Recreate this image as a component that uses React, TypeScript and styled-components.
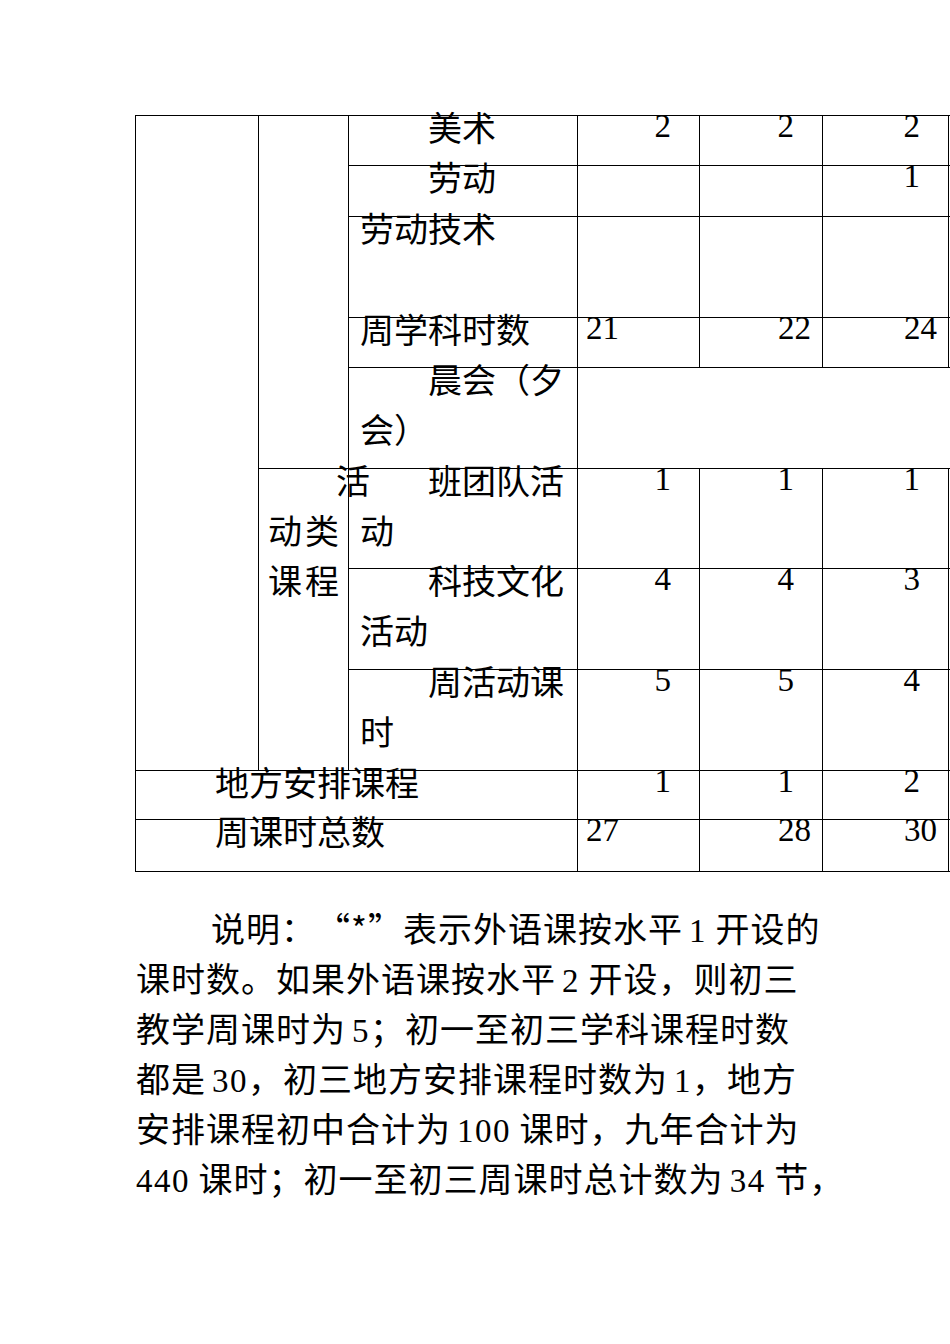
import React from 'react';
import styled, { createGlobalStyle } from 'styled-components';

const GlobalStyle = createGlobalStyle`
    html, body {
        margin: 0;
        padding: 0;
        background: #fff;
        overflow: hidden;
    }
    body {
        font-family: "Noto Sans CJK SC", "Liberation Serif", serif;
        color: #000;
    }
`;

const Page = styled.div`
    width: 950px;
    height: 1344px;
    box-sizing: border-box;
    padding: 115px 0 0 135px;
    overflow: hidden;
    text-spacing-trim: space-all;
`;

const Grid = styled.div`
    display: grid;
    grid-template-columns: 123px 90px 229px 122px 123px 126px 120px;
    grid-template-rows: 50px 51px 101px 50px 101px 100px 101px 101px 49px 52px;
    width: max-content;
    border-top: 1px solid #000;
    border-left: 1px solid #000;
`;

const Cell = styled.div<{ $col: string; $row: string }>`
    grid-column: ${(p) => p.$col};
    grid-row: ${(p) => p.$row};
    box-sizing: border-box;
    min-width: 0;
    border-right: 1px solid #000;
    border-bottom: 1px solid #000;
`;

const Label = styled.div<{ $indent?: boolean }>`
    font-size: 34px;
    line-height: 50px;
    margin-top: -14px;
    padding: 0 10px 0 11px;
    text-indent: ${(p) => (p.$indent ? '2em' : '0')};
`;

const GroupLabel = styled(Label)`
    padding: 0 9px;
    text-align: justify;
    text-align-last: justify;
`;

const Value = styled.div<{ $align: 'left' | 'right'; $wide?: boolean }>`
    font-family: "Liberation Serif", serif;
    font-size: 33px;
    line-height: 50px;
    margin-top: -15px;
    text-align: ${(p) => p.$align};
    padding: ${(p) =>
        p.$align === 'left' ? '0 0 0 8px' : p.$wide ? '0 11px 0 0' : '0 28px 0 0'};
`;

const Note = styled.div`
    margin: 31px 0 0 1px;
    font-size: 34px;
    line-height: 50px;
    letter-spacing: 1px;
    white-space: nowrap;
`;

const NoteLine = styled.div<{ $first?: boolean }>`
    height: 50px;
    text-indent: ${(p) => (p.$first ? '75px' : '0')};
`;

const Num = styled.span<{ $lead?: boolean }>`
    font-family: "Liberation Serif", serif;
    font-size: 33px;
    line-height: 1;
    letter-spacing: 1.5px;
    margin-left: ${(p) => (p.$lead ? '0' : '6px')};
`;

type Row = {
    row: string;
    label: string;
    indent?: boolean;
    wideLabel?: boolean;
    values?: (string | null)[];
    firstLeft?: boolean;
    merged?: boolean;
};

const rows: Row[] = [
    { row: '1', label: '美术', indent: true, values: ['2', '2', '2'] },
    { row: '2', label: '劳动', indent: true, values: [null, null, '1'] },
    { row: '3', label: '劳动技术', values: [null, null, null] },
    { row: '4', label: '周学科时数', values: ['21', '22', '24'], firstLeft: true },
    { row: '5', label: '晨会（夕会）', indent: true, merged: true },
    { row: '6', label: '班团队活动', indent: true, values: ['1', '1', '1'] },
    { row: '7', label: '科技文化活动', indent: true, values: ['4', '4', '3'] },
    { row: '8', label: '周活动课时', indent: true, values: ['5', '5', '4'] },
    { row: '9', label: '地方安排课程', indent: true, wideLabel: true, values: ['1', '1', '2'] },
    { row: '10', label: '周课时总数', indent: true, wideLabel: true, values: ['27', '28', '30'], firstLeft: true },
];

const noteLines: (string | number)[][] = [
    ['说明：“*”表示外语课按水平', 1, ' 开设的'],
    ['课时数。如果外语课按水平', 2, ' 开设，则初三'],
    ['教学周课时为', 5, '；初一至初三学科课程时数'],
    ['都是', 30, '，初三地方安排课程时数为', 1, '，地方'],
    ['安排课程初中合计为', 100, ' 课时，九年合计为'],
    [440, ' 课时；初一至初三周课时总计数为', 34, ' 节，'],
];

const App = () => {
    return (
        <Page lang="zh-CN">
            <GlobalStyle />
            <Grid>
                <Cell $col="1" $row="1 / 9" />
                <Cell $col="2" $row="1 / 6" />
                <Cell $col="2" $row="6 / 9">
                    <GroupLabel $indent>活动类课程</GroupLabel>
                </Cell>
                {rows.map((r) => (
                    <React.Fragment key={r.row}>
                        <Cell $col={r.wideLabel ? '1 / 4' : '3'} $row={r.row}>
                            <Label $indent={r.indent}>{r.label}</Label>
                        </Cell>
                        {r.merged ? (
                            <Cell $col="4 / 8" $row={r.row} />
                        ) : (
                            <>
                                {(r.values || []).map((v, i) => {
                                    const left = r.firstLeft && i === 0;
                                    return (
                                        <Cell key={i} $col={String(4 + i)} $row={r.row}>
                                            {v && (
                                                <Value
                                                    $align={left ? 'left' : 'right'}
                                                    $wide={v.length > 1}
                                                >
                                                    {v}
                                                </Value>
                                            )}
                                        </Cell>
                                    );
                                })}
                                <Cell $col="7" $row={r.row} />
                            </>
                        )}
                    </React.Fragment>
                ))}
            </Grid>
            <Note>
                {noteLines.map((parts, i) => (
                    <NoteLine key={i} $first={i === 0}>
                        {parts.map((p, j) =>
                            typeof p === 'number' ? (
                                <Num key={j} $lead={j === 0}>
                                    {p}
                                </Num>
                            ) : (
                                <span key={j}>{p}</span>
                            )
                        )}
                    </NoteLine>
                ))}
            </Note>
        </Page>
    );
};

export default App;
